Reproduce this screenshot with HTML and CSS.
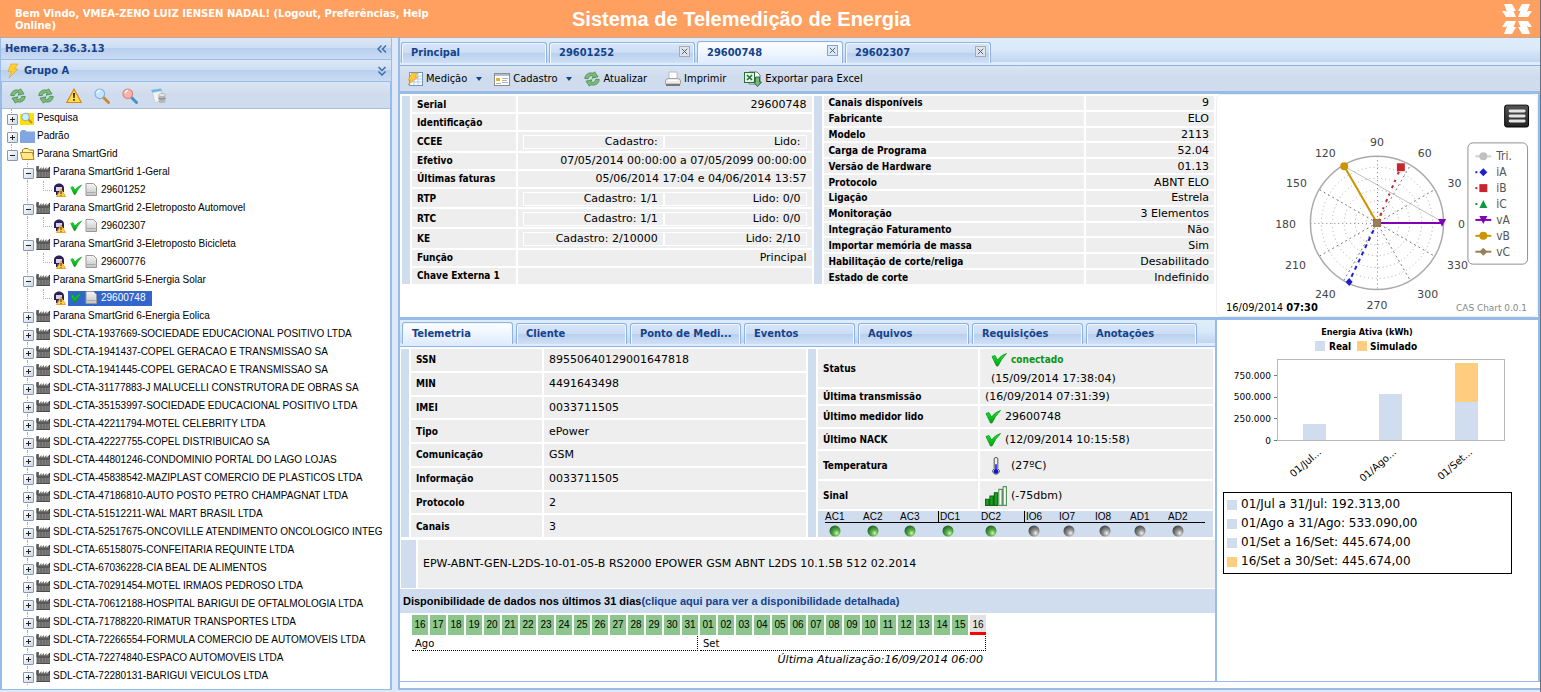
FILE: index.html
```html
<!DOCTYPE html>
<html lang="pt-BR">
<head>
<meta charset="utf-8">
<title>Sistema de Telemedição de Energia</title>
<link rel="stylesheet" href="styles.css">
</head>
<body>
<svg class="defs" aria-hidden="true">
  <defs>
    <linearGradient id="gPage" x1="0" y1="0" x2="0" y2="1"><stop offset="0" stop-color="#f6f6f6"/><stop offset="1" stop-color="#c4c4c4"/></linearGradient>
    <linearGradient id="gMenu" x1="0" y1="0" x2="0" y2="1"><stop offset="0" stop-color="#555"/><stop offset="1" stop-color="#222"/></linearGradient>
    <radialGradient id="gGreen" cx=".65" cy=".7" r=".8"><stop offset="0" stop-color="#d4f7a0"/><stop offset=".35" stop-color="#5db04c"/><stop offset="1" stop-color="#11561f"/></radialGradient>
    <radialGradient id="gGrey" cx=".65" cy=".7" r=".8"><stop offset="0" stop-color="#f4f4f4"/><stop offset=".35" stop-color="#999"/><stop offset="1" stop-color="#333"/></radialGradient>
    <linearGradient id="gCheck" x1="0" y1="0" x2="0" y2="1"><stop offset="0" stop-color="#0f2"/><stop offset="1" stop-color="#0a9a14"/></linearGradient>
  </defs>
  <symbol id="refresh" viewBox="0 0 16 16"><path d="M.8 7.600C1 3.500 5 .8 9 2.300L10.500.8 14 5.800 8 7.200 9.300 5.200C7 4 5.200 4.800 4.300 7.600Z" fill="#7dba76" stroke="#3f8a45" stroke-width=".8"/><path d="M15.200 8.400C15 12.500 11 15.200 7 13.700L5.500 15.200 2 10.200 8 8.800 6.700 10.800C9 12 10.800 11.200 11.700 8.400Z" fill="#7dba76" stroke="#3f8a45" stroke-width=".8"/></symbol>
  <symbol id="warn" viewBox="0 0 16 16"><path d="M8 1 15.300 14.500H.7Z" fill="#ffe04a" stroke="#e08214" stroke-width="1.200" stroke-linejoin="round"/><path d="M7 5h2l-.4 5H7.400Z" fill="#222"/><rect x="7.200" y="11" width="1.600" height="1.800" fill="#222"/></symbol>
  <symbol id="lens" viewBox="0 0 16 16"><path d="m9.500 9.500 5 5" stroke="#c98b3a" stroke-width="3" stroke-linecap="round"/><circle cx="5.800" cy="5.800" r="4.800" fill="#c4e6fa" stroke="#86b2dc" stroke-width="1.200"/><path d="M3 5q1-2.500 3-2.500" stroke="#fff" stroke-width="1.400" fill="none"/></symbol>
  <symbol id="lensred" viewBox="0 0 16 16"><path d="m9.500 9.500 5 5" stroke="#4a90c8" stroke-width="3" stroke-linecap="round"/><circle cx="5.800" cy="5.800" r="4.800" fill="#f7b3ac" stroke="#d98780" stroke-width="1.200"/><path d="M3 5q1-2.500 3-2.500" stroke="#fff" stroke-width="1.400" fill="none"/></symbol>
  <symbol id="docs" viewBox="0 0 16 16"><path d="m1 2 10-1.500 1.500 4L3 6Z" fill="#6cb6e8"/><path d="m2.500 4.500 9-1.500 1 10-7.500 1.500Z" fill="#f4f4f4" stroke="#c4c8cc" stroke-width=".7"/><path d="M8.500 7v6.500c0 2 7 2 7 0V7Z" fill="#b4b8bd"/><ellipse cx="12" cy="7" rx="3.500" ry="1.600" fill="#e4e6e8" stroke="#999" stroke-width=".5"/><path d="M8.500 10.200q3.500 2 7 0" stroke="#808488" fill="none"/></symbol>
  <symbol id="bolt" viewBox="0 0 16 16"><path d="M6 1h7L9.500 6H13L4 15l2.500-6.500H3Z" fill="#ffd02e" stroke="#e3a52a" stroke-width=".7"/></symbol>
  <symbol id="fsearch" viewBox="0 0 16 16"><path d="M0 4h4l1-1h9v12H0Z" fill="#ffdf00"/><path d="m8 9 4 4" stroke="#c98b3a" stroke-width="2"/><circle cx="5.500" cy="7" r="3.800" fill="#d2edfb" stroke="#7fb1c9"/></symbol>
  <symbol id="fblue" viewBox="0 0 16 16"><path d="M0 4 2 2h3l1.500 1.500H15V15H0Z" fill="#82a7e0"/></symbol>
  <symbol id="fopen" viewBox="0 0 16 16"><path d="M2.500 13V4L4 2.500h4L9.500 4h4v9Z" fill="#fff3b0" stroke="#a87a10"/><path d="M.5 6.500h12L14 13.500H2.500Z" fill="#ffe78e" stroke="#b88a18"/></symbol>
  <symbol id="factory" viewBox="0 0 16 16"><path d="M.5 14V2h2.500v3.500L5.500 3v2.500L8 3v2.500L10.500 3v2.500L14 2.500V14Z" fill="#6c6c6c"/><path d="M1 2.500v4.500h12.500V3" fill="none" stroke="#474747"/><path d="M3.500 8v6M6.500 8v6M9.500 8v6M12 8v6" stroke="#828282"/><path d="M.5 13.500H14" stroke="#4c4c4c"/></symbol>
  <symbol id="agent" viewBox="0 0 16 16"><path d="M2 6C2 0 12 0 12 6v4H9v3H4v-3H2Z" fill="#2b2054"/><path d="M4 5h6v4H4Z" fill="#d7d3e4"/><path d="M5 10h3v4H5Z" fill="#4a4370"/><path d="m9 7 4.500 7.500h-9Z" fill="#ffd44a" stroke="#e88d12" stroke-width=".8"/><path d="M9 9v3M9 12.800v1" stroke="#222"/></symbol>
  <symbol id="check" viewBox="0 0 16 16"><path d="M1 4.500 4 3.500 6.500 8Q10 3 15.500 1.500 10 7 7 14H5.500Z" fill="url(#gCheck)" stroke="#128a1c" stroke-width=".8"/></symbol>
  <symbol id="page" viewBox="0 0 16 16"><path d="M2 1.500h7.500l3 3v9H2Z" fill="url(#gPage)" stroke="#999" stroke-linejoin="round"/><path d="M3 10.500h8.500" stroke="#aaa"/></symbol>
  <symbol id="medicao" viewBox="0 0 16 16"><rect x="2.500" y="1.500" width="13" height="13" fill="#fff" stroke="#6e98cc"/><path d="M3 5h12M3 8h12M3 11h12M7 2v12M11 2v12" stroke="#b2cbe8"/><path d="M5 2h6L8 6h3L1 14l3-5H1Z" fill="#ffc83a" stroke="#dd971c" stroke-width=".6"/></symbol>
  <symbol id="card" viewBox="0 0 16 16"><rect x=".5" y="2.500" width="15" height="12" fill="#fff" stroke="#8b8b8b"/><rect x="1" y="3" width="14" height="2" fill="#abc0d6"/><rect x="2" y="7" width="4" height="3" fill="#e7b52c"/><path d="M8 7.500h6M8 9.500h5M8 11.500h6M2 12.500h5" stroke="#b2b2b2"/></symbol>
  <symbol id="printer" viewBox="0 0 16 16"><path d="M4 8V1h8v7Z" fill="#fff" stroke="#bbb"/><path d="M.5 9 3 7.500h10L15.500 9v4H.5Z" fill="#ececec" stroke="#a5a5a5"/><path d="M1 13h14v2H1Z" fill="#777"/><path d="M3 9.500h10" stroke="#fff"/></symbol>
  <symbol id="excel" viewBox="0 0 18 16"><path d="M5 1h8l3 3v9H5Z" fill="#fff" stroke="#778"/><rect x=".5" y="1.500" width="10" height="10" fill="#e3f3e3" stroke="#277339"/><path d="m3 4 5 5M8 4 3 9" stroke="#277339" stroke-width="1.600"/><path d="M11.500 6h4v5H17.500l-4 4.500L9.500 11h2Z" fill="#79b779" stroke="#234f28" stroke-width=".8"/></symbol>
  <symbol id="thermo" viewBox="0 0 12 22"><path d="M4 2.500q2-2 4 0V14q2.500 1.500 1.500 4-3.500 4-7 0-1-2.500 1.500-4Z" fill="#eee" stroke="#444"/><path d="M5 9h2v6H5Z" fill="#33f"/><circle cx="6" cy="17" r="2.600" fill="#11c"/></symbol>
  <symbol id="signal" viewBox="0 0 20 18"><path d="M.5 12h3v5.500h-3ZM4.500 9h3v8.500h-3ZM8.500 6h3v11.500h-3Z" fill="#18a418" stroke="#0c6a12"/><path d="M12.500 3h3v14.500h-3ZM16.500.5h3v17h-3Z" fill="#f2f8f2" stroke="#5b9160"/></symbol>
  <symbol id="led" viewBox="0 0 12 12"><circle cx="6" cy="6" r="5.500" fill="url(#gGreen)"/></symbol>
  <symbol id="ledoff" viewBox="0 0 12 12"><circle cx="6" cy="6" r="5.500" fill="url(#gGrey)"/></symbol>
</svg>

<header class="banner">
  <p class="welcome">Bem Vindo, VMEA-ZENO LUIZ IENSEN NADAL! (<a href="#">Logout</a>, <a href="#">Preferências</a>, <a href="#">Help Online</a>)</p>
  <h1>Sistema de Telemedição de Energia</h1>
  <svg class="brand" viewBox="0 0 32 32" fill="#fff" aria-label="Copel"><g id="q"><path d="M3 1h8l4 7h-2.500l2.500 6H7L3 9h3Z"/><path d="M1 8h4l3 6H5Z"/></g><use href="#q" transform="matrix(-1 0 0 1 32 0)"/><use href="#q" transform="matrix(1 0 0 -1 0 32)"/><use href="#q" transform="matrix(-1 0 0 -1 32 32)"/></svg>
</header>

<div class="frame">
<aside class="side">
  <div class="bar"><h2>Hemera 2.36.3.13</h2><button class="collapse" aria-label="Recolher"><svg viewBox="0 0 10 10"><path d="M4.500 1.500 1 5l3.500 3.500M9 1.500 5.500 5 9 8.500"/></svg></button></div>
  <div class="bar"><svg class="ic bolt"><use href="#bolt"/></svg><h2>Grupo A</h2><button class="collapse" aria-label="Recolher grupo"><svg viewBox="0 0 10 10"><path d="M1.500 1 5 4.500 8.500 1M1.500 5.500 5 9l3.500-3.500"/></svg></button></div>
  <div class="sidebody">
  <div class="tools">
    <button aria-label="Atualizar"><svg class="ic"><use href="#refresh"/></svg></button>
    <button aria-label="Recarregar"><svg class="ic"><use href="#refresh"/></svg></button>
    <button aria-label="Alertas"><svg class="ic"><use href="#warn"/></svg></button>
    <button aria-label="Pesquisar"><svg class="ic"><use href="#lens"/></svg></button>
    <button aria-label="Limpar pesquisa"><svg class="ic"><use href="#lensred"/></svg></button>
    <button aria-label="Documentos"><svg class="ic"><use href="#docs"/></svg></button>
  </div>
  <ul class="tree">
    <li class="l1"><i class="el plus"></i><svg class="ic"><use href="#fsearch"/></svg><span>Pesquisa</span></li>
    <li class="l1"><i class="el plus"></i><svg class="ic"><use href="#fblue"/></svg><span>Padrão</span></li>
    <li class="l1 last"><i class="el minus"></i><svg class="ic"><use href="#fopen"/></svg><span>Parana SmartGrid</span></li>
    <li class="l2"><i class="el minus"></i><svg class="ic"><use href="#factory"/></svg><span>Parana SmartGrid 1-Geral</span></li>
    <li class="l3"><i class="el"></i><svg class="ic"><use href="#agent"/></svg><b><svg class="ic ck"><use href="#check"/></svg><svg class="ic"><use href="#page"/></svg><span>29601252</span></b></li>
    <li class="l2"><i class="el minus"></i><svg class="ic"><use href="#factory"/></svg><span>Parana SmartGrid 2-Eletroposto Automovel</span></li>
    <li class="l3"><i class="el"></i><svg class="ic"><use href="#agent"/></svg><b><svg class="ic ck"><use href="#check"/></svg><svg class="ic"><use href="#page"/></svg><span>29602307</span></b></li>
    <li class="l2"><i class="el minus"></i><svg class="ic"><use href="#factory"/></svg><span>Parana SmartGrid 3-Eletroposto Bicicleta</span></li>
    <li class="l3"><i class="el"></i><svg class="ic"><use href="#agent"/></svg><b><svg class="ic ck"><use href="#check"/></svg><svg class="ic"><use href="#page"/></svg><span>29600776</span></b></li>
    <li class="l2"><i class="el minus"></i><svg class="ic"><use href="#factory"/></svg><span>Parana SmartGrid 5-Energia Solar</span></li>
    <li class="l3 sel"><i class="el"></i><svg class="ic"><use href="#agent"/></svg><b><svg class="ic ck"><use href="#check"/></svg><svg class="ic"><use href="#page"/></svg><span>29600748</span></b></li>
    <li class="l2"><i class="el plus"></i><svg class="ic"><use href="#factory"/></svg><span>Parana SmartGrid 6-Energia Eolica</span></li>
    <li class="l2"><i class="el plus"></i><svg class="ic"><use href="#factory"/></svg><span>SDL-CTA-1937669-SOCIEDADE EDUCACIONAL POSITIVO LTDA</span></li>
    <li class="l2"><i class="el plus"></i><svg class="ic"><use href="#factory"/></svg><span>SDL-CTA-1941437-COPEL GERACAO E TRANSMISSAO SA</span></li>
    <li class="l2"><i class="el plus"></i><svg class="ic"><use href="#factory"/></svg><span>SDL-CTA-1941445-COPEL GERACAO E TRANSMISSAO SA</span></li>
    <li class="l2"><i class="el plus"></i><svg class="ic"><use href="#factory"/></svg><span>SDL-CTA-31177883-J MALUCELLI CONSTRUTORA DE OBRAS SA</span></li>
    <li class="l2"><i class="el plus"></i><svg class="ic"><use href="#factory"/></svg><span>SDL-CTA-35153997-SOCIEDADE EDUCACIONAL POSITIVO LTDA</span></li>
    <li class="l2"><i class="el plus"></i><svg class="ic"><use href="#factory"/></svg><span>SDL-CTA-42211794-MOTEL CELEBRITY LTDA</span></li>
    <li class="l2"><i class="el plus"></i><svg class="ic"><use href="#factory"/></svg><span>SDL-CTA-42227755-COPEL DISTRIBUICAO SA</span></li>
    <li class="l2"><i class="el plus"></i><svg class="ic"><use href="#factory"/></svg><span>SDL-CTA-44801246-CONDOMINIO PORTAL DO LAGO LOJAS</span></li>
    <li class="l2"><i class="el plus"></i><svg class="ic"><use href="#factory"/></svg><span>SDL-CTA-45838542-MAZIPLAST COMERCIO DE PLASTICOS LTDA</span></li>
    <li class="l2"><i class="el plus"></i><svg class="ic"><use href="#factory"/></svg><span>SDL-CTA-47186810-AUTO POSTO PETRO CHAMPAGNAT LTDA</span></li>
    <li class="l2"><i class="el plus"></i><svg class="ic"><use href="#factory"/></svg><span>SDL-CTA-51512211-WAL MART BRASIL LTDA</span></li>
    <li class="l2"><i class="el plus"></i><svg class="ic"><use href="#factory"/></svg><span>SDL-CTA-52517675-ONCOVILLE ATENDIMENTO ONCOLOGICO INTEG</span></li>
    <li class="l2"><i class="el plus"></i><svg class="ic"><use href="#factory"/></svg><span>SDL-CTA-65158075-CONFEITARIA REQUINTE LTDA</span></li>
    <li class="l2"><i class="el plus"></i><svg class="ic"><use href="#factory"/></svg><span>SDL-CTA-67036228-CIA BEAL DE ALIMENTOS</span></li>
    <li class="l2"><i class="el plus"></i><svg class="ic"><use href="#factory"/></svg><span>SDL-CTA-70291454-MOTEL IRMAOS PEDROSO LTDA</span></li>
    <li class="l2"><i class="el plus"></i><svg class="ic"><use href="#factory"/></svg><span>SDL-CTA-70612188-HOSPITAL BARIGUI DE OFTALMOLOGIA LTDA</span></li>
    <li class="l2"><i class="el plus"></i><svg class="ic"><use href="#factory"/></svg><span>SDL-CTA-71788220-RIMATUR TRANSPORTES LTDA</span></li>
    <li class="l2"><i class="el plus"></i><svg class="ic"><use href="#factory"/></svg><span>SDL-CTA-72266554-FORMULA COMERCIO DE AUTOMOVEIS LTDA</span></li>
    <li class="l2"><i class="el plus"></i><svg class="ic"><use href="#factory"/></svg><span>SDL-CTA-72274840-ESPACO AUTOMOVEIS LTDA</span></li>
    <li class="l2"><i class="el plus"></i><svg class="ic"><use href="#factory"/></svg><span>SDL-CTA-72280131-BARIGUI VEICULOS LTDA</span></li>
  </ul>
  </div>
</aside>

<main class="work">
  <nav class="tabs">
    <div class="tab"><button>Principal</button></div>
    <div class="tab"><button>29601252</button><button class="x" aria-label="Fechar 29601252"><svg viewBox="0 0 9 9"><path d="m1 1 7 7M8 1 1 8"/></svg></button></div>
    <div class="tab on"><button>29600748</button><button class="x" aria-label="Fechar 29600748"><svg viewBox="0 0 9 9"><path d="m1 1 7 7M8 1 1 8"/></svg></button></div>
    <div class="tab"><button>29602307</button><button class="x" aria-label="Fechar 29602307"><svg viewBox="0 0 9 9"><path d="m1 1 7 7M8 1 1 8"/></svg></button></div>
  </nav>
  <div class="toolbar">
    <button class="menu"><svg class="ic"><use href="#medicao"/></svg>Medição</button>
    <button class="menu"><svg class="ic"><use href="#card"/></svg>Cadastro</button>
    <button><svg class="ic"><use href="#refresh"/></svg>Atualizar</button>
    <button><svg class="ic"><use href="#printer"/></svg>Imprimir</button>
    <button><svg class="ic wide"><use href="#excel"/></svg>Exportar para Excel</button>
  </div>

  <section class="upper">
    <div class="meter">
      <div class="block">
        <table class="data right first">
          <tr><th>Serial</th><td>29600748</td></tr>
          <tr><th>Identificação</th><td></td></tr>
          <tr class="tall"><th>CCEE</th><td><div class="pair"><span>Cadastro:</span><span>Lido:</span></div></td></tr>
          <tr><th>Efetivo</th><td>07/05/2014 00:00:00 a 07/05/2099 00:00:00</td></tr>
          <tr><th>Últimas faturas</th><td>05/06/2014 17:04 e 04/06/2014 13:57</td></tr>
          <tr class="tall"><th>RTP</th><td><div class="pair"><span>Cadastro: 1/1</span><span>Lido: 0/0</span></div></td></tr>
          <tr class="tall"><th>RTC</th><td><div class="pair"><span>Cadastro: 1/1</span><span>Lido: 0/0</span></div></td></tr>
          <tr class="tall"><th>KE</th><td><div class="pair"><span>Cadastro: 2/10000</span><span>Lido: 2/10</span></div></td></tr>
          <tr><th>Função</th><td>Principal</td></tr>
          <tr><th>Chave Externa 1</th><td></td></tr>
        </table>
      </div>
      <div class="block">
        <table class="data right second">
          <tr><th>Canais disponíveis</th><td>9</td></tr>
          <tr><th>Fabricante</th><td>ELO</td></tr>
          <tr><th>Modelo</th><td>2113</td></tr>
          <tr><th>Carga de Programa</th><td>52.04</td></tr>
          <tr><th>Versão de Hardware</th><td>01.13</td></tr>
          <tr><th>Protocolo</th><td>ABNT ELO</td></tr>
          <tr><th>Ligação</th><td>Estrela</td></tr>
          <tr><th>Monitoração</th><td>3 Elementos</td></tr>
          <tr><th>Integração Faturamento</th><td>Não</td></tr>
          <tr><th>Importar memória de massa</th><td>Sim</td></tr>
          <tr><th>Habilitação de corte/religa</th><td>Desabilitado</td></tr>
          <tr><th>Estado de corte</th><td>Indefinido</td></tr>
        </table>
      </div>
    </div>
    <div class="polar">
      <svg viewBox="1215 95 322 221" width="322" height="221" role="img" aria-label="Diagrama fasorial">
        <g fill="none" stroke="#aaa" stroke-dasharray="1 3"><circle cx="1376" cy="223" r="11"/><circle cx="1376" cy="223" r="22"/><circle cx="1376" cy="223" r="33"/><circle cx="1376" cy="223" r="45"/><circle cx="1376" cy="223" r="56"/></g>
        <g stroke="#777" stroke-dasharray="1 3"><path d="M1309 223.500h134M1376.500 156v134"/><path d="M1318 189.500l116 67M1318 256.500l116-67M1342.500 165l67 116M1342.500 281l67-116" stroke-dasharray="2 3"/></g>
        <circle cx="1376" cy="223" r="67" fill="none" stroke="#aaa" stroke-width="1.500"/>
        <path d="M1343 166 1442 222" stroke="#c0c0c0"/>
        <path d="M1376 223 1348 282" stroke="#1f1fd0" stroke-width="2" stroke-dasharray="4 4"/>
        <path d="M1376 223 1400 167" stroke="#c9252f" stroke-width="2" stroke-dasharray="2 6 3 4"/>
        <path d="M1376 223h66" stroke="#8000b8" stroke-width="2"/>
        <path d="M1376 223 1343 166" stroke="#cc9400" stroke-width="2"/>
        <path d="m1348 278.500 3.500 4-3.500 4-3.500-4Z" fill="#1f1fd0"/>
        <rect x="1396" y="163" width="8" height="8" fill="#c9252f"/>
        <path d="M1437.500 219h8l-4 8Z" fill="#8000b8"/>
        <circle cx="1343" cy="166" r="4" fill="#cc9400"/>
        <rect x="1372" y="219" width="8" height="8" fill="#bf4b2e"/><circle cx="1376" cy="223" r="4" fill="#96805c"/>
        <g class="deg"><text x="1376" y="146">90</text><text x="1324" y="157">120</text><text x="1424" y="157">60</text><text x="1295" y="187">150</text><text x="1454" y="187">30</text><text x="1284" y="228">180</text><text x="1461" y="228">0</text><text x="1294" y="269">210</text><text x="1457" y="269">330</text><text x="1324" y="299">240</text><text x="1427" y="299">300</text><text x="1376" y="310">270</text></g>
        <rect x="1467.500" y="142.500" width="60" height="122" rx="5" fill="none" stroke="#909090"/>
        <g stroke-width="2"><path d="M1475 156h16" stroke="#d0d0d0"/><path d="M1475 172h2" stroke="#1f1fd0"/><path d="M1475 188h2" stroke="#c9252f"/><path d="M1475 204h2" stroke="#0c9a3e"/><path d="M1475 220h16" stroke="#8000b8"/><path d="M1475 236h16" stroke="#cc9400"/><path d="M1475 252h16" stroke="#96805c"/></g>
        <circle cx="1483" cy="156" r="4" fill="#c0c0c0"/><path d="m1483 168 4 4-4 4-4-4Z" fill="#1f1fd0"/><rect x="1479" y="184" width="8" height="8" fill="#c9252f"/><path d="m1483 200 4 8h-8Z" fill="#0c9a3e"/><path d="M1479 216h8l-4 8Z" fill="#8000b8"/><circle cx="1483" cy="236" r="4" fill="#cc9400"/><path d="m1483 248 4 4-4 4-4-4Z" fill="#96805c"/>
        <g class="key"><text x="1496" y="160">Tri.</text><text x="1496" y="176">iA</text><text x="1496" y="192">iB</text><text x="1496" y="208">iC</text><text x="1496" y="224">vA</text><text x="1496" y="240">vB</text><text x="1496" y="256">vC</text></g>
        <rect x="1504.500" y="104.500" width="24" height="22" rx="2" fill="url(#gMenu)" stroke="#000"/>
        <path d="M1510 110.500h14M1510 115.500h14M1510 120.500h14" stroke="#e4e4e4" stroke-width="3" stroke-linecap="round"/>
        <text class="stamp" x="1224" y="312">16/09/2014 <tspan font-weight="bold">07:30</tspan></text>
        <text class="credit" x="1527" y="312">CAS Chart 0.0.1</text>
      </svg>
    </div>
  </section>

  <section class="lower">
    <div class="center">
      <nav class="tabs small">
        <div class="tab on"><button>Telemetria</button></div>
        <div class="tab"><button>Cliente</button></div>
        <div class="tab"><button>Ponto de Medi...</button></div>
        <div class="tab"><button>Eventos</button></div>
        <div class="tab"><button>Aquivos</button></div>
        <div class="tab"><button>Requisições</button></div>
        <div class="tab"><button>Anotações</button></div>
      </nav>
      <div class="telemetry">
        <div class="block">
          <table class="data ids">
            <tr><th>SSN</th><td>89550640129001647818</td></tr>
            <tr><th>MIN</th><td>4491643498</td></tr>
            <tr><th>IMEI</th><td>0033711505</td></tr>
            <tr><th>Tipo</th><td>ePower</td></tr>
            <tr><th>Comunicação</th><td>GSM</td></tr>
            <tr><th>Informação</th><td>0033711505</td></tr>
            <tr><th>Protocolo</th><td>2</td></tr>
            <tr><th>Canais</th><td>3</td></tr>
          </table>
        </div>
        <div class="block">
          <div class="stack">
          <table class="data state">
            <tr class="h40"><th>Status</th><td><div class="status"><span class="line"><svg class="ic"><use href="#check"/></svg><strong>conectado</strong></span><span>(15/09/2014 17:38:04)</span></div></td></tr>
            <tr class="h17"><th>Última transmissão</th><td>(16/09/2014 07:31:39)</td></tr>
            <tr class="h23"><th>Último medidor lido</th><td><span class="line"><svg class="ic"><use href="#check"/></svg>29600748</span></td></tr>
            <tr class="h22"><th>Último NACK</th><td><span class="line"><svg class="ic"><use href="#check"/></svg>(12/09/2014 10:15:58)</span></td></tr>
            <tr class="h30"><th>Temperatura</th><td><span class="line"><svg class="gauge"><use href="#thermo"/></svg>(27ºC)</span></td></tr>
            <tr class="h30"><th>Sinal</th><td><span class="line"><svg class="gauge"><use href="#signal"/></svg>(-75dbm)</span></td></tr>
          </table>
          <div class="ports">
            <div><span>AC1</span><svg><use href="#led"/></svg></div>
            <div><span>AC2</span><svg><use href="#led"/></svg></div>
            <div><span>AC3</span><svg><use href="#led"/></svg></div>
            <div><span class="cut">DC1</span><svg><use href="#led"/></svg></div>
            <div><span>DC2</span><svg><use href="#led"/></svg></div>
            <div><span class="cut">IO6</span><svg><use href="#ledoff"/></svg></div>
            <div><span>IO7</span><svg><use href="#ledoff"/></svg></div>
            <div><span>IO8</span><svg><use href="#ledoff"/></svg></div>
            <div><span>AD1</span><svg><use href="#ledoff"/></svg></div>
            <div><span>AD2</span><svg><use href="#ledoff"/></svg></div>
          </div>
          </div>
        </div>
      </div>
      <p class="firmware">EPW-ABNT-GEN-L2DS-10-01-05-B RS2000 EPOWER GSM ABNT L2DS 10.1.5B 512 02.2014</p>
      <h3 class="avail">Disponibilidade de dados nos últimos 31 dias<a href="#">(clique aqui para ver a disponibilidade detalhada)</a></h3>
      <div class="calendar">
        <div class="month"><div class="days"><span>16</span><span>17</span><span>18</span><span>19</span><span>20</span><span>21</span><span>22</span><span>23</span><span>24</span><span>25</span><span>26</span><span>27</span><span>28</span><span>29</span><span>30</span><span>31</span></div><div class="name">Ago</div></div>
        <div class="month"><div class="days"><span>01</span><span>02</span><span>03</span><span>04</span><span>05</span><span>06</span><span>07</span><span>08</span><span>09</span><span>10</span><span>11</span><span>12</span><span>13</span><span>14</span><span>15</span><span class="today">16</span></div><div class="name">Set</div></div>
        <p class="updated">Última Atualização:16/09/2014 06:00</p>
      </div>
    </div>
    <div class="energy">
      <svg viewBox="1217 320 320 166" width="320" height="166" role="img" aria-label="Energia Ativa por período">
        <text class="ttl" x="1367" y="335">Energia Ativa (kWh)</text>
        <rect x="1315" y="341" width="10" height="10" fill="#d0ddee"/><text class="leg" x="1329" y="350">Real</text>
        <rect x="1357" y="341" width="10" height="10" fill="#ffcc80"/><text class="leg" x="1370" y="350">Simulado</text>
        <rect x="1277.500" y="359.500" width="227" height="81" fill="none" stroke="#b8b8b8"/>
        <path d="M1274 375.500h3M1274 397.500h3M1274 418.500h3M1274 440.500h3" stroke="#777"/>
        <g class="ax"><text x="1271" y="379">750.000</text><text x="1271" y="400">500.000</text><text x="1271" y="422">250.000</text><text x="1271" y="444">0</text></g>
        <rect x="1303" y="424" width="23" height="16" fill="#d0ddee"/><rect x="1379" y="394" width="23" height="46" fill="#d0ddee"/><rect x="1455" y="402" width="23" height="38" fill="#d0ddee"/><rect x="1455" y="363" width="23" height="39" fill="#ffcc80"/>
        <g class="ax tilt"><text transform="translate(1322 453) rotate(-41)">01/Jul...</text><text transform="translate(1397 453) rotate(-41)">01/Ago...</text><text transform="translate(1473 453) rotate(-41)">01/Set...</text></g>
      </svg>
      <ul class="totals">
        <li>01/Jul a 31/Jul: 192.313,00</li>
        <li>01/Ago a 31/Ago: 533.090,00</li>
        <li>01/Set a 16/Set: 445.674,00</li>
        <li class="sim">16/Set a 30/Set: 445.674,00</li>
      </ul>
    </div>
  </section>
  <div class="foot"></div>
</main>
</div>
</body>
</html>
```
FILE: styles.css
```css
* { box-sizing: border-box; }
body {
  margin: 0;
  height: 100vh;
  overflow: hidden;
  display: flex;
  flex-direction: column;
  background: #dfe8f6;
  border-right: 1px solid #68707e;
  font-family: "DejaVu Sans", sans-serif;
  font-size: 11px;
  color: #000;
}
.defs { position: absolute; width: 0; height: 0; }
h1, h2, h3, p, ul { margin: 0; padding: 0; }
ul { list-style: none; }
a { color: inherit; text-decoration: none; }
button {
  border: 0;
  background: none;
  padding: 0;
  margin: 0;
  font: inherit;
  color: inherit;
}
.ic { width: 16px; height: 16px; flex: none; display: block; }
.ic.wide { width: 18px; }
.ic.ck { padding: 2px; }

.banner {
  flex: none;
  height: 38px;
  display: grid;
  grid-template-columns: 557px 1fr auto;
  align-items: center;
  padding: 0 7px 0 15px;
  background: #ff9f60;
  border-bottom: 1px solid #c3a99c;
  color: #fff;
}
.welcome { font-size: 10px; line-height: 12px; font-weight: bold; max-width: 440px; padding-top: 2px; }
.banner h1 { font: bold 20px/24px "Liberation Sans", sans-serif; }
.brand { width: 32px; height: 32px; }

.frame { flex: 1; min-height: 0; display: flex; gap: 6px; padding-bottom: 2px; }

.side {
  flex: none;
  width: 392px;
  display: flex;
  flex-direction: column;
  border: 1px solid #99bbe8;
  border-top: 0;
}
.bar {
  flex: none;
  height: 22px;
  display: flex;
  align-items: center;
  padding: 0 4px;
  background: linear-gradient(#dbe7f7, #cddef3 50%, #b9cfee 50%, #cadcf3);
  border-bottom: 1px solid #99bbe8;
  color: #15428b;
}
.bar h2 { flex: 1; font: bold 11px/16px "DejaVu Sans Condensed", "DejaVu Sans", sans-serif; }
.bolt { margin-right: 3px; }
.collapse svg { width: 10px; height: 10px; display: block; fill: none; stroke: #3f6ea8; stroke-width: 1.500; }
.sidebody {
  flex: 1;
  min-height: 0;
  display: flex;
  flex-direction: column;
  background: #fff;
  border: 1px solid #99bbe8;
  border-width: 0 1px;
}
.tools {
  flex: none;
  height: 27px;
  display: flex;
  align-items: center;
  gap: 12px;
  padding: 2px 8px 0;
  background: linear-gradient(#dbe5f2, #cfdcee 50%);
  border-bottom: 1px solid #a9bfd3;
}
.tree {
  flex: 1;
  min-height: 0;
  overflow: hidden;
  padding-left: 2px;
  font: 10px/18px "Liberation Sans", sans-serif;
}
.tree li { height: 18px; display: flex; align-items: center; white-space: nowrap; }
.tree .l2 { padding-left: 16px; }
.tree .l3 { padding-left: 32px; position: relative; }
.tree b { font-weight: normal; display: flex; align-items: center; height: 15px; padding-right: 6px; }
.tree span { padding-left: 1px; }
.sel b { background: #3366cc; color: #fff; }
.el { flex: none; width: 16px; height: 18px; position: relative; }
.el::before, .l3::before {
  content: "";
  position: absolute;
  left: 7px;
  top: 0;
  height: 18px;
  border-left: 1px dotted #b0b0b0;
}
.l3::before { left: 23px; }
.l1.last .el::before { height: 9px; }
.l3 .el::before { height: 9px; width: 8px; border-bottom: 1px dotted #b0b0b0; }
.plus::after, .minus::after {
  content: "";
  position: absolute;
  left: 3px;
  top: 5px;
  width: 9px;
  height: 9px;
  border: 1px solid #8298b5;
  border-radius: 1px;
  background:
    linear-gradient(#222, #222) center / 5px 1px no-repeat,
    linear-gradient(#222, #222) center / 1px 5px no-repeat,
    linear-gradient(135deg, #fff, #cdd8e6);
}
.minus::after {
  background:
    linear-gradient(#222, #222) center / 5px 1px no-repeat,
    linear-gradient(135deg, #fff, #cdd8e6);
}

.work {
  flex: 1;
  min-width: 0;
  display: flex;
  flex-direction: column;
  border-left: 2px solid #99bbe8;
}
.tabs {
  flex: none;
  height: 28px;
  display: flex;
  align-items: flex-end;
  gap: 2px;
  padding: 0 0 2px 1px;
  background: linear-gradient(#deecfd, #deecfd) bottom / 100% 3px no-repeat, linear-gradient(#dfedf9, #dbeaf9 40%, #b9d0ef);
  border-bottom: 1px solid #8db2e3;
}
.tab {
  flex: 0 1 146px;
  height: 21px;
  display: flex;
  justify-content: space-between;
  padding: 0 4px 0 9px;
  border: 1px solid #8db2e3;
  border-bottom: 0;
  border-radius: 3px 3px 0 0;
  background: linear-gradient(#d9e6f8, #cbdcf4 50%, #b8cfee 50%, #cfe0f6);
  box-shadow: inset 1px 1px #f2f7fd, inset -1px 0 #f2f7fd;
  font: bold 11px/20px "DejaVu Sans Condensed", "DejaVu Sans", sans-serif;
  color: #15428b;
}
.tab.on { height: 22px; background: linear-gradient(#fff, #deecfd); }
.x { width: 11px; height: 11px; margin-top: 3px; border: 1px solid #aaa; background: #dce4ee; padding: 1px; }
.x svg { display: block; width: 7px; height: 7px; stroke: #555; stroke-width: 1.200; }
.on .x { border-color: #7fa5d8; background: #dcebfc; }
.small { height: 27px; gap: 3px; padding-left: 2px; }
.small .tab { flex-basis: 111px; white-space: nowrap; overflow: hidden; }

.toolbar {
  flex: none;
  height: 28px;
  display: flex;
  align-items: center;
  gap: 18px;
  padding: 0 7px;
  background: linear-gradient(#dbe5f2, #cfdcee 40%);
  border-bottom: 3px solid #99bbe8;
  font: 11px/16px "DejaVu Sans Condensed", "DejaVu Sans", sans-serif;
}
.toolbar button { display: flex; align-items: center; gap: 3px; }
.toolbar .menu { margin-right: -6px; }
.menu::after {
  content: "";
  border: 3px solid transparent;
  border-top: 4px solid #15428b;
  border-bottom: 0;
  margin: 0 0 0 6px;
}

.upper {
  flex: none;
  display: flex;
  background: #fff;
  border: solid #99bbe8;
  border-width: 0 2px 3px 0;
}
.meter, .telemetry { display: grid; }
.meter { flex: 1; grid-template-columns: 411fr 402fr; align-items: start; padding: 2px 0 0 2px; }
.telemetry { grid-template-columns: 1fr 1fr; padding: 2px 0 0 1px; }
.block { display: flex; height: 190px; }
.block::before { content: ""; flex: none; width: 8px; background: #d0ddee; border-bottom: 2px solid #fff; }
.data { flex: 1; width: 100%; height: 190px; table-layout: fixed; border-spacing: 2px 0; }
.data th, .data td {
  height: 15px;
  padding: 1px 5px 0;
  background: #eee;
  background-clip: padding-box;
  border-bottom: 2px solid #fff;
  text-align: left;
  line-height: 12px;
  white-space: nowrap;
}
.data th { font: bold 10px/12px "DejaVu Sans Condensed", "DejaVu Sans", sans-serif; }
.right td { text-align: right; }
.first th { width: 104px; }
.second th { width: 67%; }
.ids th { width: 131px; }
.state th { width: 160px; }
.first th, .first td { height: 18px; }
.first .tall th, .first .tall td { height: 20px; }
.pair { display: grid; grid-template-columns: 1fr 1fr; border: 1px solid #fff; }
.pair span { height: 12px; padding-right: 5px; }
.pair span:first-child { border-right: 2px solid #fff; }

.polar { flex: none; width: 322px; border: 1px solid #eee; border-radius: 5px; }
.polar svg, .energy svg { display: block; max-width: 100%; }
.deg text { font-size: 11px; fill: #444; text-anchor: middle; }
.key text { font: 12px "DejaVu Sans Condensed", "DejaVu Sans", sans-serif; fill: #555; }
.stamp { font-size: 10px; }
.credit { font-size: 9px; fill: #888; text-anchor: end; }

.lower {
  flex: 1;
  min-height: 0;
  display: flex;
  background: #fff;
  border-right: 2px solid #99bbe8;
  border-bottom: 1px solid #99bbe8;
}
.center { flex: 1; min-width: 0; border-right: 2px solid #99bbe8; }
.stack { flex: 1; display: flex; flex-direction: column; }
.data.state { flex: none; height: 162px; }
.data .h40 { height: 40px; }
.data .h17 { height: 17px; }
.data .h23 { height: 23px; }
.data .h22 { height: 22px; }
.data .h30 { height: 30px; }
.line { display: flex; align-items: center; gap: 4px; }
.status { display: grid; gap: 6px; padding-left: 6px; }
.status .line { height: 14px; }
.status strong { font: bold 10px/12px "DejaVu Sans Condensed", "DejaVu Sans", sans-serif; color: #0a9412; }
.gauge { width: 22px; height: 20px; }
.ports {
  flex: none;
  height: 26px;
  margin: 0 2px;
  padding: 0 8px 0 7px;
  display: grid;
  grid-template-columns: 38fr 37fr 38fr 43fr 43fr 35fr 36fr 35fr 38fr 37fr;
  background: #d0ddee;
  font: 10px/11px "Liberation Sans", sans-serif;
}
.ports div { display: flex; flex-direction: column; }
.ports span { display: block; border-bottom: 1px solid #000; }
.ports .cut { box-shadow: inset 1px 0 #000; padding-left: 2px; }
.ports svg { width: 12px; height: 12px; margin: 2px 0 0 4px; }

.firmware {
  height: 48px;
  margin: 1px 0 1px 1px;
  padding-left: 5px;
  border-left: 17px solid #fff;
  line-height: 48px;
  background: #eee;
  border-image: linear-gradient(90deg, #d0ddee 15px, #fff 15px) 0 0 0 17;
  white-space: nowrap;
}
.avail {
  height: 24px;
  padding-left: 3px;
  background: #d0ddee;
  font: bold 11px/24px "Liberation Sans", sans-serif;
  white-space: nowrap;
}
.avail a { color: #15428b; }
.calendar { display: grid; grid-template-columns: auto auto; column-gap: 2px; width: max-content; padding: 2px 0 0 12px; }
.days { display: flex; gap: 2px; font: 10px/20px "Liberation Sans", sans-serif; text-align: center; }
.days span { width: 16px; height: 20px; background: #8cc68c; }
.days .today { background: #e2e2e2; border-bottom: 3px solid #f00; }
.name { height: 15px; margin-top: 1px; padding-left: 3px; line-height: 15px; border: 1px dotted #000; border-width: 0 1px 1px 0; font-size: 10px; }
.updated { grid-column: 1 / 3; text-align: right; padding-right: 3px; font-style: italic; line-height: 18px; }

.energy { flex: none; width: 321px; }
.ttl { font: bold 9px "DejaVu Sans Condensed", "DejaVu Sans", sans-serif; text-anchor: middle; }
.leg { font: bold 10px "DejaVu Sans Condensed", "DejaVu Sans", sans-serif; }
.ax text { font-size: 9px; text-anchor: end; }
.ax.tilt text { font-size: 10px; }
.totals { margin: 6px 26px 0 6px; padding: 2px 3px; border: 1px solid #000; font-size: 12px; line-height: 19px; }
.totals li { display: flex; align-items: center; gap: 4px; }
.totals li::before { content: ""; width: 10px; height: 10px; background: #d0ddee; }
.totals .sim::before { background: #ffcc80; }
.foot { flex: none; height: 8px; background: #fff; border-bottom: 2px solid #99bbe8; }
```
